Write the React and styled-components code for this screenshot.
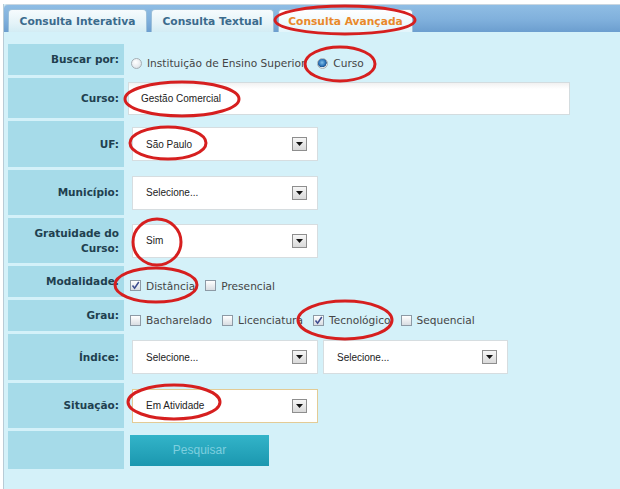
import React from "react";
import styled, { createGlobalStyle } from "styled-components";

const Global = createGlobalStyle`
  html, body { margin: 0; padding: 0; background: #ffffff; }
  * { box-sizing: border-box; }
`;

const Page = styled.div`
  position: relative;
  width: 620px;
  height: 489px;
  overflow: hidden;
  background: #ffffff;
  padding-top: 4px;
`;

const Panel = styled.div`
  margin-left: 3px;
  height: 100%;
  border-left: 1px solid #b8cbd6;
  background: #d4f1f9;
`;

const TabBar = styled.div`
  height: 28px;
  display: flex;
  align-items: flex-end;
  gap: 4px;
  padding-left: 4px;
  border-top: 1px solid #c9d6e0;
  border-top-left-radius: 4px;
  background: linear-gradient(#8fbde4 0%, #80b0dc 55%, #6c9ecf 100%);
`;

const Tab = styled.div`
  width: ${(p) => p.$w}px;
  height: 23px;
  display: flex;
  align-items: center;
  justify-content: center;
  border: 1px solid #9cc0da;
  border-bottom: none;
  border-radius: 4px 4px 0 0;
  background: ${(p) =>
    p.$active
      ? "linear-gradient(#ffffff, #e2f5fb)"
      : "linear-gradient(#f6fbfd 0%, #e4f3f8 60%, #d3ecf4 100%)"};
  font-family: "DejaVu Sans", Verdana, sans-serif;
  font-weight: bold;
  font-size: 10.7px;
  color: ${(p) => (p.$active ? "#e9892b" : "#3b6b8d")};
`;

const Form = styled.div`
  display: flex;
  flex-direction: column;
  gap: 3px;
  padding: 12px 0 0 4px;
`;

const Row = styled.div`
  display: grid;
  grid-template-columns: 116px 1fr;
  column-gap: 2px;
  height: ${(p) => p.$h}px;
`;

const Label = styled.div`
  background: #a6dbe9;
  display: flex;
  align-items: center;
  justify-content: flex-end;
  text-align: right;
  padding-right: 5px;
  padding-top: ${(p) => p.$pt || 0}px;
  font-family: "DejaVu Sans", Verdana, sans-serif;
  font-weight: bold;
  font-size: 10.5px;
  line-height: 15px;
  color: #21404f;
`;

const Value = styled.div`
  display: flex;
  align-items: center;
  padding-left: ${(p) => p.$pl}px;
  padding-top: ${(p) => p.$pt || 0}px;
  gap: ${(p) => p.$gap || 0}px;
`;

const TextInput = styled.div`
  width: 442px;
  height: 33px;
  display: flex;
  align-items: center;
  padding-left: 12px;
  border: 1px solid #d3dcdf;
  background: linear-gradient(#f1f1f1 0px, #ffffff 6px, #ffffff 100%);
  font-family: "Liberation Sans", Arial, sans-serif;
  font-size: 10px;
  color: #222;
`;

const Select = styled.div`
  width: ${(p) => p.$w || 186}px;
  height: ${(p) => p.$h || 34}px;
  display: flex;
  align-items: center;
  justify-content: space-between;
  padding: 0 10px 0 13px;
  border: 1px solid ${(p) => (p.$focus ? "#e3cb95" : "#d6dde0")};
  background: #ffffff;
  font-family: "Liberation Sans", Arial, sans-serif;
  font-size: 10px;
  color: #222;
`;

const ArrowBox = styled.span`
  width: 15px;
  height: 14px;
  display: flex;
  align-items: center;
  justify-content: center;
  border: 1px solid #8e8e8e;
  background: linear-gradient(#f6f6f6, #d9d9d9);
`;

const Option = styled.label`
  display: flex;
  align-items: center;
  gap: 5px;
  font-family: "DejaVu Sans", Verdana, sans-serif;
  font-size: 10.6px;
  color: #454545;
`;

const Radio = styled.span`
  width: 11px;
  height: 11px;
  border-radius: 50%;
  border: 1px solid #a5aeb4;
  background: ${(p) =>
    p.$on
      ? "radial-gradient(circle at 45% 40%, #7fc0ea 0%, #2a72b8 45%, #1c4f86 60%, #dfe5ea 66%, #f6f8fa 100%)"
      : "radial-gradient(circle at 40% 35%, #ffffff 0%, #e6eaee 60%, #c9d0d6 100%)"};
`;

const Box = styled.span`
  width: 11px;
  height: 11px;
  display: flex;
  align-items: center;
  justify-content: center;
  border: 1px solid #8d9aa5;
  background: linear-gradient(#ffffff, #d9dde2);
`;

const Button = styled.div`
  width: 139px;
  height: 31px;
  display: flex;
  align-items: center;
  justify-content: center;
  background: linear-gradient(#33b4c9, #1b97af);
  font-family: "Liberation Sans", Arial, sans-serif;
  font-size: 12px;
  color: #7ecfdf;
`;

const Overlay = styled.svg`
  position: absolute;
  left: 0;
  top: 0;
  pointer-events: none;
`;

const Arrow = () => (
  <ArrowBox>
    <svg width="7" height="4" viewBox="0 0 7 4">
      <path d="M0 0 H7 L3.5 4 Z" fill="#111" />
    </svg>
  </ArrowBox>
);

const Check = ({ on }) => (
  <Box>
    {on && (
      <svg width="9" height="9" viewBox="0 0 9 9">
        <path d="M1.5 4.5 L3.6 7.2 L7.8 1" stroke="#3d4c8f" strokeWidth="1.5" fill="none" />
      </svg>
    )}
  </Box>
);

const Sel = ({ text, w, focus }) => (
  <Select $w={w} $focus={focus}>
    <span>{text}</span>
    <Arrow />
  </Select>
);

const ellipses = [
  { cx: 345, cy: 20, rx: 70, ry: 14, r: 0 },
  { cx: 340, cy: 64, rx: 35, ry: 17, r: 0 },
  { cx: 182, cy: 99, rx: 57, ry: 17, r: 0 },
  { cx: 168, cy: 143, rx: 38, ry: 16, r: 0 },
  { cx: 157, cy: 242, rx: 24, ry: 23, r: 0 },
  { cx: 156, cy: 285, rx: 41, ry: 17, r: 0 },
  { cx: 345, cy: 320, rx: 47, ry: 19, r: 0 },
  { cx: 174, cy: 402, rx: 46, ry: 17, r: 0 },
];

export default function App() {
  return (
    <>
      <Global />
      <Page>
        <Panel>
          <TabBar>
            <Tab $w={139}>Consulta Interativa</Tab>
            <Tab $w={123}>Consulta Textual</Tab>
            <Tab $w={135} $active>Consulta Avançada</Tab>
          </TabBar>
          <Form>
            <Row $h={31}>
              <Label>Buscar por:</Label>
              <Value $pl={5} $pt={7} $gap={12}>
                <Option><Radio />Instituição de Ensino Superior</Option>
                <Option><Radio $on />Curso</Option>
              </Value>
            </Row>
            <Row $h={40}>
              <Label>Curso:</Label>
              <Value $pl={2}>
                <TextInput>Gestão Comercial</TextInput>
              </Value>
            </Row>
            <Row $h={46}>
              <Label>UF:</Label>
              <Value $pl={6}>
                <Sel text="São Paulo" />
              </Value>
            </Row>
            <Row $h={45}>
              <Label>Município:</Label>
              <Value $pl={6}>
                <Sel text="Selecione..." />
              </Value>
            </Row>
            <Row $h={45}>
              <Label>Gratuidade do<br />Curso:</Label>
              <Value $pl={6}>
                <Sel text="Sim" />
              </Value>
            </Row>
            <Row $h={31}>
              <Label>Modalidade:</Label>
              <Value $pl={4} $pt={8} $gap={10}>
                <Option><Check on />Distância</Option>
                <Option><Check />Presencial</Option>
              </Value>
            </Row>
            <Row $h={31}>
              <Label>Grau:</Label>
              <Value $pl={4} $pt={9} $gap={10}>
                <Option><Check />Bacharelado</Option>
                <Option><Check />Licenciatura</Option>
                <Option><Check on />Tecnológico</Option>
                <Option><Check />Sequencial</Option>
              </Value>
            </Row>
            <Row $h={46}>
              <Label>Índice:</Label>
              <Value $pl={6} $gap={5}>
                <Sel text="Selecione..." />
                <Sel text="Selecione..." w={185} />
              </Value>
            </Row>
            <Row $h={45}>
              <Label>Situação:</Label>
              <Value $pl={6}>
                <Sel text="Em Atividade" focus />
              </Value>
            </Row>
            <Row $h={38}>
              <Label />
              <Value $pl={4}>
                <Button>Pesquisar</Button>
              </Value>
            </Row>
          </Form>
        </Panel>
        <Overlay width="620" height="489" viewBox="0 0 620 489">
          {ellipses.map((e, i) => (
            <ellipse
              key={i}
              cx={e.cx}
              cy={e.cy}
              rx={e.rx}
              ry={e.ry}
              fill="none"
              stroke="#d61f1f"
              strokeWidth="3"
            />
          ))}
        </Overlay>
      </Page>
    </>
  );
}
